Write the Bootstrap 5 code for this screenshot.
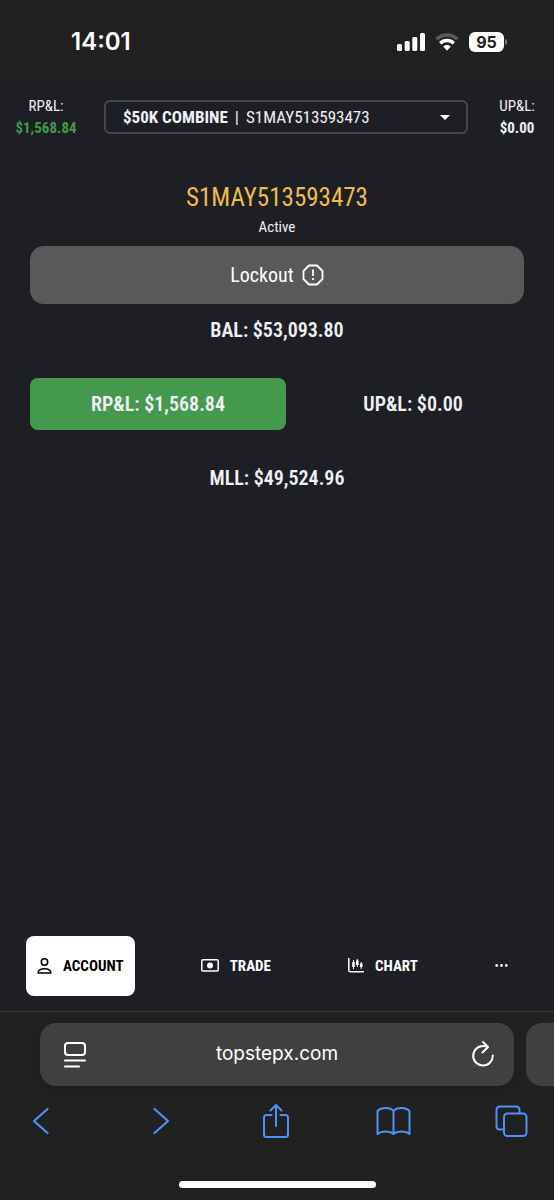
<!DOCTYPE html>
<html lang="en">
<head>
<meta charset="utf-8">
<meta name="viewport" content="width=device-width, initial-scale=1">
<title>TopstepX</title>
<link href="https://cdn.jsdelivr.net/npm/bootstrap@5.3.0/dist/css/bootstrap.min.css" rel="stylesheet">
<style>
  body { background: #1e1f25; color: #f0f0f5; font-family: "Roboto Condensed", "Liberation Sans Narrow", Roboto, sans-serif; line-height: 1.5; }
  svg { display: block; flex: none; }
  .chrome { background: #212121; color: #fff; font-family: Inter, sans-serif; }
  .status { height: 83px; padding: 0 47px 0 71px; }
  .clock { font-size: 24px; font-weight: 600; }
  .battery { width: 35px; height: 20px; border-radius: 6px; background: #fff; color: #212121; font-size: 16px; font-weight: 700; line-height: 20px; }
  .battery-tip { width: 2px; height: 6px; margin-left: 1px; border-radius: 0 2px 2px 0; background: #777; }
  .topbar { padding-top: 12px; gap: 12px; font-size: 15px; line-height: 22px; }
  .pl-left { width: 92px; }
  .pl-right { width: 74px; }
  .gain { color: #419a4c; }
  .picker { height: 34px; margin-top: 5px; padding: 0 16px 0 17px; border: 2px solid #46474c; border-radius: 6px; font-size: 17px; }
  .picker label { display: flex; gap: 7px; }
  .picker select { appearance: none; background: none; border: 0; padding: 0 0 0 7px; color: inherit; font: inherit; min-width: 0; }
  .account-main { padding: 41px 30px 0; }
  .account-id { color: #edbd4c; font-size: 25px; line-height: 36px; }
  .state { font-size: 15px; line-height: 22px; }
  .lockout { height: 58px; margin-top: 8px; border-radius: 14px; background: #595959; color: #fff; font-size: 20px; }
  .lockout:hover { background: #666; color: #fff; }
  .figure-text { font-size: 20px; line-height: 52px; font-weight: 600; }
  .pl-grid { display: grid; grid-template-columns: 15fr 13fr; gap: 16px; margin: 22px 0; }
  .filled { background: #45994f; border-radius: 8px; }
  .tabs-bar { padding: 0 35px 15px 26px; }
  .tab-btn { height: 60px; padding: 0 11px; gap: 11px; border: 0; border-radius: 8px; color: #fff; font-size: 15px; font-weight: 700; }
  .tab-btn.active, .tab-btn.active:hover { background: #fff; color: #000; }
  .browser { border-top: 1px solid #33343b; padding-top: 11px; }
  .address-row { padding-left: 40px; gap: 12px; }
  .address { height: 63px; padding: 0 20px 0 23px; border-radius: 16px; background: #404040; box-shadow: 0 2px 8px #0003; font-size: 19px; }
  .address input { background: none; border: 0; color: #fff; min-width: 0; margin-right: 5px; outline: 0; }
  .next-tab { width: 28px; border-radius: 16px 0 0 16px; background: #404040; }
  .tool-row { padding: 17px 25px 0 23px; }
  .plain { background: none; border: 0; padding: 0; color: #fff; }
  .tool-row .plain { width: 36px; color: #4b93f7; }
  .tool-row svg { margin: 0 auto; }
  .home-bar { width: 197px; height: 7px; margin: 42px auto 12px; border-radius: 4px; background: #fff; }
</style>
</head>
<body class="d-flex flex-column min-vh-100">
<div class="chrome status d-flex align-items-center justify-content-between">
  <div class="clock">14:01</div>
  <div class="d-flex align-items-center">
    <svg width="28" height="18" viewBox="0 0 28 18" fill="#fff"><rect y="11" width="5" height="7" rx="1.5"/><rect x="7.700" y="8" width="5" height="10" rx="1.500"/><rect x="15.300" y="4" width="5" height="14" rx="1.500"/><rect x="23" width="5" height="18" rx="1.500"/></svg>
    <svg class="mx-2" width="28" height="20" viewBox="0 0 28 20" fill="none" stroke-width="3.400"><path d="M3.500 7.300a15 15 0 0 1 21 0" stroke="#5a5a5a"/><path d="M7.200 11.300a9.800 9.800 0 0 1 13.600 0" stroke="#fff"/><path d="M10.700 14.600q3.300-2.600 6.600 0L14 18.200z" fill="#fff" stroke="#fff" stroke-width="1"/></svg>
    <div class="battery text-center">95</div><div class="battery-tip"></div>
  </div>
</div>

<header class="topbar d-flex align-items-start text-center">
  <div class="pl-left"><div>RP&amp;L:</div><div class="gain fw-bold">$1,568.84</div></div>
  <div class="picker flex-grow-1 d-flex align-items-center">
    <label for="account"><b>$50K COMBINE</b><span>|</span></label>
    <select id="account" class="flex-grow-1"><option>S1MAY513593473</option></select>
    <svg width="10" height="5" viewBox="0 0 10 5"><path d="M0 0h10L5 5z" fill="#fff"/></svg>
  </div>
  <div class="pl-right"><div>UP&amp;L:</div><div class="fw-bold">$0.00</div></div>
</header>

<main class="account-main flex-grow-1 text-center">
  <h1 class="account-id fw-normal mb-0">S1MAY513593473</h1>
  <div class="state">Active</div>
  <button type="button" class="btn lockout w-100 d-flex align-items-center justify-content-center gap-2">Lockout
    <svg width="22" height="22" viewBox="0 0 22 22" fill="none" stroke="#fff" stroke-width="1.800"><path d="M7 1.500h8L20.500 7v8L15 20.500H7L1.500 15V7z" stroke-linejoin="round"/><path d="M11 5.500v6.500M11 14v2"/></svg>
  </button>
  <div class="figure-text">BAL: $53,093.80</div>
  <div class="pl-grid figure-text"><div class="filled">RP&amp;L: $1,568.84</div><div>UP&amp;L: $0.00</div></div>
  <div class="figure-text">MLL: $49,524.96</div>
</main>

<nav class="tabs-bar d-flex justify-content-between">
  <button type="button" class="btn tab-btn active d-flex align-items-center">
    <svg width="15" height="17" viewBox="0 0 15 17" fill="none" stroke="currentColor" stroke-width="1.500"><circle cx="7.500" cy="4" r="3.200"/><path d="M1 15c0-5.800 13-5.800 13 0z" stroke-linejoin="round"/></svg>ACCOUNT</button>
  <button type="button" class="btn tab-btn d-flex align-items-center">
    <svg width="18" height="15" viewBox="0 0 18 15"><rect x=".8" y=".8" width="16.400" height="11.200" rx="1" fill="none" stroke="#fff" stroke-width="1.500"/><circle cx="9" cy="6.400" r="3" fill="#fff"/></svg>TRADE</button>
  <button type="button" class="btn tab-btn d-flex align-items-center">
    <svg width="16" height="16" viewBox="0 0 16 16" fill="none" stroke="#fff"><path d="M.8 0v12.200q0 1.500 1.500 1.500H16" stroke-width="1.500"/><path d="M5.500 2v9M9.300 1v8M13.200 4v7" stroke-width="1"/><path d="M5.500 4v5M9.300 2.500v4.500M13.200 5.500v3.500" stroke-width="2.600"/></svg>CHART</button>
  <button type="button" class="btn tab-btn d-flex align-items-center" aria-label="More">
    <svg width="13" height="4" viewBox="0 0 13 4" fill="#fff"><circle cx="1.700" cy="1.500" r="1.400"/><circle cx="6.500" cy="1.500" r="1.400"/><circle cx="11.300" cy="1.500" r="1.400"/></svg></button>
</nav>

<footer class="chrome browser">
  <div class="address-row d-flex">
    <div class="address flex-grow-1 d-flex align-items-center">
      <button type="button" class="plain" aria-label="Page menu"><svg width="24" height="26" viewBox="0 0 24 26" fill="none" stroke="#fff" stroke-width="2" stroke-linecap="round"><rect x="2" y="1" width="20" height="12" rx="3"/><path d="M2 18.500h20M2 24.500h14"/></svg></button>
      <input class="flex-grow-1 text-center" type="text" value="topstepx.com" aria-label="Address">
      <button type="button" class="plain" aria-label="Reload"><svg width="22" height="28" viewBox="0 0 22 28" fill="none" stroke="#fff" stroke-width="2" stroke-linecap="round" stroke-linejoin="round"><path d="M20.800 14.500a9.800 9.800 0 1 1-9.800-9.500q2.500 0 4.500.4M11 1l5 5-5.500 5.500"/></svg></button>
    </div>
    <div class="next-tab"></div>
  </div>
  <div class="tool-row d-flex justify-content-between align-items-center">
    <button type="button" class="plain" aria-label="Back"><svg width="18" height="28" viewBox="0 0 18 28" fill="none" stroke="currentColor" stroke-width="2.200" stroke-linecap="round" stroke-linejoin="round"><path d="M15.500 2L2 14 15.500 26"/></svg></button>
    <button type="button" class="plain" aria-label="Forward"><svg width="20" height="28" viewBox="0 0 20 28" fill="none" stroke="currentColor" stroke-width="2.200" stroke-linecap="round" stroke-linejoin="round"><path d="M5.500 2L19 14 5.500 26"/></svg></button>
    <button type="button" class="plain" aria-label="Share"><svg width="28" height="36" viewBox="0 0 28 36" fill="none" stroke="currentColor" stroke-width="2" stroke-linecap="round" stroke-linejoin="round"><path d="M9.500 12H4.500Q2 12 2 14.500v17Q2 34 4.500 34h19q2.500 0 2.500-2.500v-17Q26 12 23.500 12h-5M14 23V2M8.500 7.500L14 2l5.500 5.500"/></svg></button>
    <button type="button" class="plain" aria-label="Bookmarks"><svg width="35" height="30" viewBox="0 0 35 30" fill="none" stroke="currentColor" stroke-width="2" stroke-linejoin="round"><path d="M17.500 5C14.500 1 5.500 1 1.500 5v23c4-3.500 12-3.500 16 0 4-3.500 12-3.500 16 0V5c-4-4-13-4-16 0zV28"/></svg></button>
    <button type="button" class="plain" aria-label="Tabs"><svg width="33" height="33" viewBox="0 0 33 33" fill="none" stroke="currentColor" stroke-width="2"><path d="M9 24.500H5q-3.500 0-3.500-3.500V5Q1.500 1.500 5 1.500h16q3.500 0 3.500 3.500v3"/><rect x="9" y="8.500" width="22.500" height="22.500" rx="3.500"/></svg></button>
  </div>
  <div class="home-bar"></div>
</footer>
<script src="https://cdn.jsdelivr.net/npm/bootstrap@5.3.0/dist/js/bootstrap.bundle.min.js"></script>
</body>
</html>
